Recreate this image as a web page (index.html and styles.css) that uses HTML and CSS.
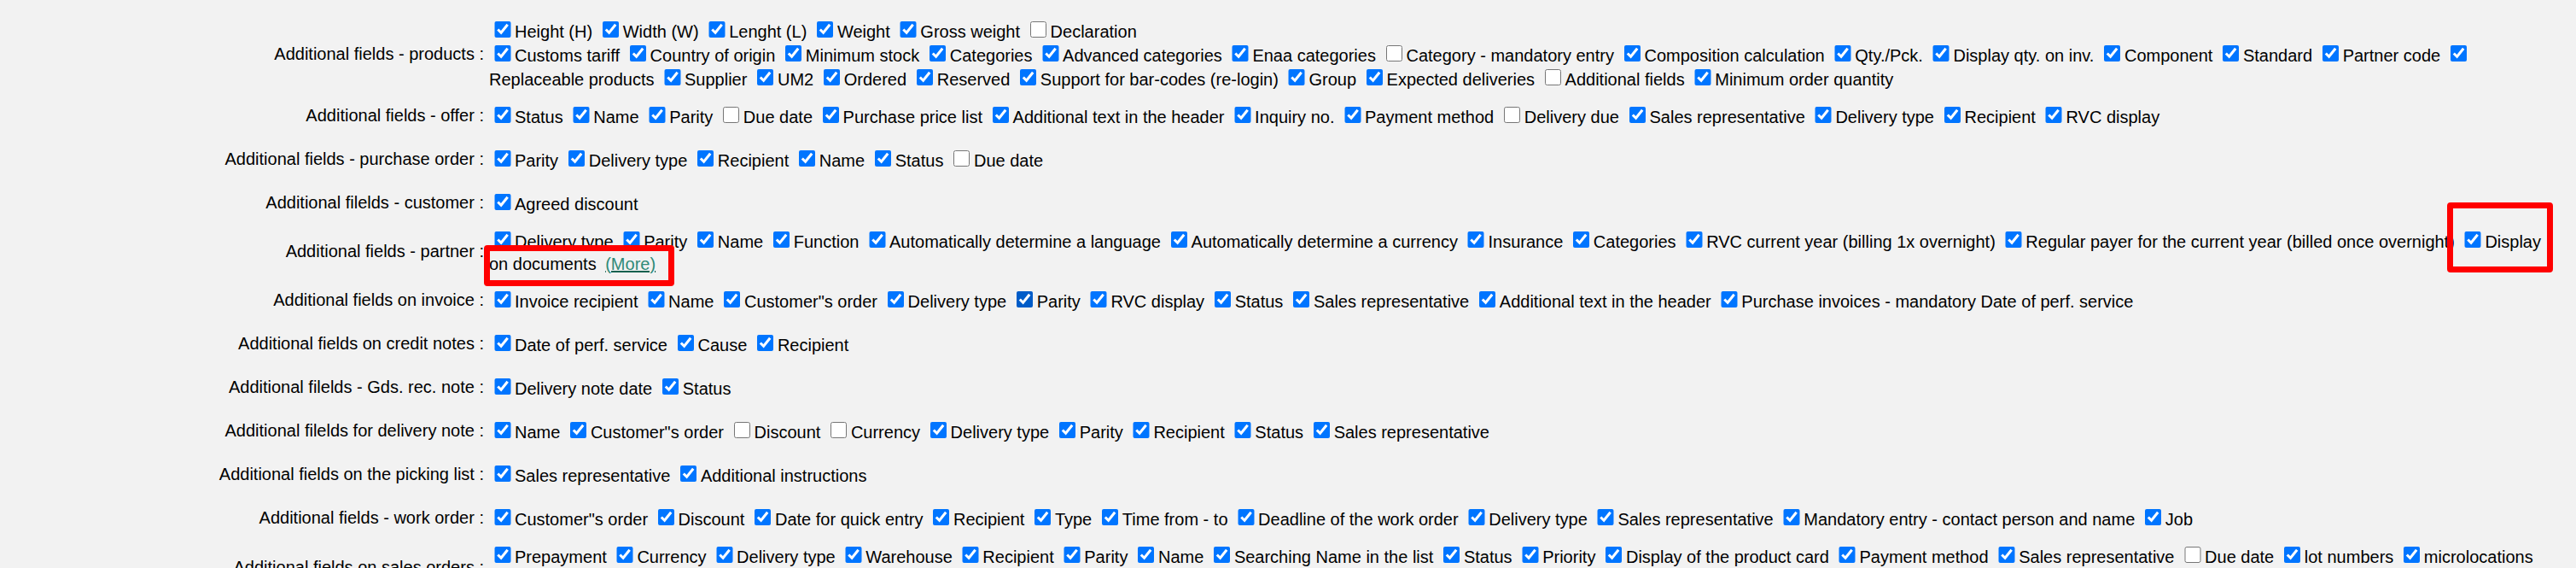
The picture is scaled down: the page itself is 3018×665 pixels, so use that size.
FILE: index.html
```html
<!DOCTYPE html>
<html lang="en">
<head>
    <meta charset="UTF-8">
    <title>Settings - additional fields</title>
    <link rel="stylesheet" href="styles.css">
</head>
<body>
    <table class="settings">
        <!-- previous row, scrolled mostly out of view -->
        <tr class="row-prev">
            <td class="label">Additional fields - warehouse :</td>
            <td class="fields">
                <input type="checkbox" checked>Stock card
                <input type="checkbox" checked>Inventory
                <input type="checkbox" checked>Reservations<br>
                <input type="checkbox" checked>Serial numbers
                <input type="checkbox" checked>lot numbers
                <input type="checkbox">Expiry date
                <input type="checkbox" checked>microlocations
                <input type="checkbox" checked>Display product card
                <input type="checkbox" checked>Display dual product description
            </td>
        </tr>
        <tr>
            <td class="label">Additional fields - products :</td>
            <td class="fields">
                <input type="checkbox" checked>Height (H)
                <input type="checkbox" checked>Width (W)
                <input type="checkbox" checked>Lenght (L)
                <input type="checkbox" checked>Weight
                <input type="checkbox" checked>Gross weight
                <input type="checkbox">Declaration<br>
                <input type="checkbox" checked>Customs tariff
                <input type="checkbox" checked>Country of origin
                <input type="checkbox" checked>Minimum stock
                <input type="checkbox" checked>Categories
                <input type="checkbox" checked>Advanced categories
                <input type="checkbox" checked>Enaa categories
                <input type="checkbox">Category - mandatory entry
                <input type="checkbox" checked>Composition calculation
                <input type="checkbox" checked>Qty./Pck.
                <input type="checkbox" checked>Display qty. on inv.
                <input type="checkbox" checked>Component
                <input type="checkbox" checked>Standard
                <input type="checkbox" checked>Partner code
                <input type="checkbox" checked>Replaceable products
                <input type="checkbox" checked>Supplier
                <input type="checkbox" checked>UM2
                <input type="checkbox" checked>Ordered
                <input type="checkbox" checked>Reserved
                <input type="checkbox" checked>Support for bar-codes (re-login)
                <input type="checkbox" checked>Group
                <input type="checkbox" checked>Expected deliveries
                <input type="checkbox">Additional fields
                <input type="checkbox" checked>Minimum order quantity
            </td>
        </tr>
        <tr>
            <td class="label">Additional fields - offer :</td>
            <td class="fields">
                <input type="checkbox" checked>Status
                <input type="checkbox" checked>Name
                <input type="checkbox" checked>Parity
                <input type="checkbox">Due date
                <input type="checkbox" checked>Purchase price list
                <input type="checkbox" checked>Additional text in the header
                <input type="checkbox" checked>Inquiry no.
                <input type="checkbox" checked>Payment method
                <input type="checkbox">Delivery due
                <input type="checkbox" checked>Sales representative
                <input type="checkbox" checked>Delivery type
                <input type="checkbox" checked>Recipient
                <input type="checkbox" checked>RVC display
            </td>
        </tr>
        <tr>
            <td class="label">Additional fields - purchase order :</td>
            <td class="fields">
                <input type="checkbox" checked>Parity
                <input type="checkbox" checked>Delivery type
                <input type="checkbox" checked>Recipient
                <input type="checkbox" checked>Name
                <input type="checkbox" checked>Status
                <input type="checkbox">Due date
            </td>
        </tr>
        <tr>
            <td class="label">Additional filelds - customer :</td>
            <td class="fields">
                <input type="checkbox" checked>Agreed discount
            </td>
        </tr>
        <tr>
            <td class="label">Additional fields - partner :</td>
            <td class="fields">
                <input type="checkbox" checked>Delivery type
                <input type="checkbox" checked>Parity
                <input type="checkbox" checked>Name
                <input type="checkbox" checked>Function
                <input type="checkbox" checked>Automatically determine a language
                <input type="checkbox" checked>Automatically determine a currency
                <input type="checkbox" checked>Insurance
                <input type="checkbox" checked>Categories
                <input type="checkbox" checked>RVC current year (billing 1x overnight)
                <input type="checkbox" checked>Regular payer for the current year (billed once overnight)
                <input type="checkbox" checked>Display on documents
                <a href="#" class="more">(More)</a>
            </td>
        </tr>
        <tr>
            <td class="label">Additional fields on invoice :</td>
            <td class="fields">
                <input type="checkbox" checked>Invoice recipient
                <input type="checkbox" checked>Name
                <input type="checkbox" checked>Customer"s order
                <input type="checkbox" checked>Delivery type
                <input type="checkbox" class="hovered" checked>Parity
                <input type="checkbox" checked>RVC display
                <input type="checkbox" checked>Status
                <input type="checkbox" checked>Sales representative
                <input type="checkbox" checked>Additional text in the header
                <input type="checkbox" checked>Purchase invoices - mandatory Date of perf. service
            </td>
        </tr>
        <tr>
            <td class="label">Additional fields on credit notes :</td>
            <td class="fields">
                <input type="checkbox" checked>Date of perf. service
                <input type="checkbox" checked>Cause
                <input type="checkbox" checked>Recipient
            </td>
        </tr>
        <tr>
            <td class="label">Additional filelds - Gds. rec. note :</td>
            <td class="fields">
                <input type="checkbox" checked>Delivery note date
                <input type="checkbox" checked>Status
            </td>
        </tr>
        <tr>
            <td class="label">Additional filelds for delivery note :</td>
            <td class="fields">
                <input type="checkbox" checked>Name
                <input type="checkbox" checked>Customer"s order
                <input type="checkbox">Discount
                <input type="checkbox">Currency
                <input type="checkbox" checked>Delivery type
                <input type="checkbox" checked>Parity
                <input type="checkbox" checked>Recipient
                <input type="checkbox" checked>Status
                <input type="checkbox" checked>Sales representative
            </td>
        </tr>
        <tr>
            <td class="label">Additional fields on the picking list :</td>
            <td class="fields">
                <input type="checkbox" checked>Sales representative
                <input type="checkbox" checked>Additional instructions
            </td>
        </tr>
        <tr>
            <td class="label">Additional fields - work order :</td>
            <td class="fields">
                <input type="checkbox" checked>Customer"s order
                <input type="checkbox" checked>Discount
                <input type="checkbox" checked>Date for quick entry
                <input type="checkbox" checked>Recipient
                <input type="checkbox" checked>Type
                <input type="checkbox" checked>Time from - to
                <input type="checkbox" checked>Deadline of the work order
                <input type="checkbox" checked>Delivery type
                <input type="checkbox" checked>Sales representative
                <input type="checkbox" checked>Mandatory entry - contact person and name
                <input type="checkbox" checked>Job
            </td>
        </tr>
        <tr>
            <td class="label">Additional fields on sales orders :</td>
            <td class="fields">
                <input type="checkbox" checked>Prepayment
                <input type="checkbox" checked>Currency
                <input type="checkbox" checked>Delivery type
                <input type="checkbox" checked>Warehouse
                <input type="checkbox" checked>Recipient
                <input type="checkbox" checked>Parity
                <input type="checkbox" checked>Name
                <input type="checkbox" checked>Searching Name in the list
                <input type="checkbox" checked>Status
                <input type="checkbox" checked>Priority
                <input type="checkbox" checked>Display of the product card
                <input type="checkbox" checked>Payment method
                <input type="checkbox" checked>Sales representative
                <input type="checkbox">Due date
                <input type="checkbox" checked>lot numbers
                <input type="checkbox" checked>microlocations
                <input type="checkbox" checked>Serial numbers
                <input type="checkbox">Expiry date
                <input type="checkbox" checked>Additional text in the header
            </td>
        </tr>
    </table>

    <!-- highlight frames drawn over the screenshot -->
    <div class="mark mark-display"></div>
    <div class="mark mark-more"></div>
</body>
</html>
```

FILE: styles.css
```css
html, body {
    margin: 0;
    padding: 0;
}
body {
    background: #f2f2f2;
    color: #000;
    font-family: "Liberation Sans", Arial, sans-serif;
    font-size: 20px;
    overflow: hidden;
}
.settings {
    table-layout: fixed;
    width: 2980px;
    margin: -63px 0 0 8px;
    border-collapse: separate;
    border-spacing: 0;
}
.settings tr {
    height: 51px;
}
.settings td {
    padding: 4.5px 3px;
    vertical-align: middle;
}
.settings .label {
    width: 556px;
    text-align: right;
    white-space: nowrap;
}
.settings .row-prev td {
    padding-bottom: 19px;
}
.fields input[type="checkbox"] {
    width: 19.5px;
    height: 19.5px;
    margin: 3.5px 4.5px 3px 6px;
    vertical-align: baseline;
}
.fields input.hovered {
    accent-color: #005cc8;
}
.more {
    display: inline-block;
    padding-top: 3px;
    margin-left: 5px;
    color: #2f8a78;
    text-decoration: underline;
    text-decoration-color: #14614f;
}
.mark {
    position: absolute;
    border: 7px solid #ff0000;
    border-radius: 4px;
}
.mark-display {
    left: 2867px;
    top: 237px;
    width: 110px;
    height: 68px;
}
.mark-more {
    left: 567px;
    top: 287px;
    width: 209px;
    height: 34px;
}
```
